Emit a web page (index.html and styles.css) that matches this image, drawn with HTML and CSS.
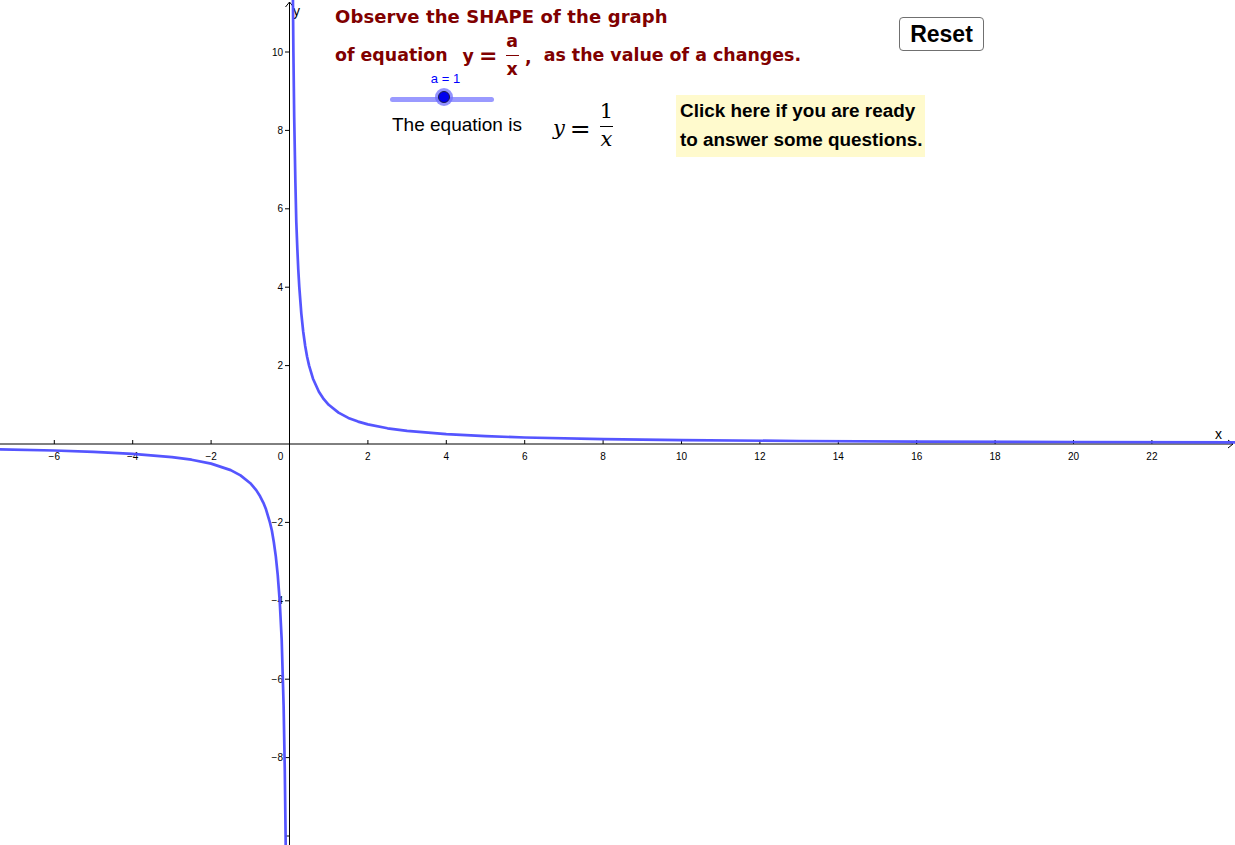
FILE: index.html
```html
<!DOCTYPE html>
<html>
<head>
<meta charset="utf-8">
<link rel="stylesheet" href="styles.css">
</head>
<body>
<div class="stage">
  <svg class="graph" width="1235" height="845" viewBox="0 0 1235 845">
    <g class="axes">
      <line x1="0" y1="444" x2="1233" y2="444"/>
      <polyline class="arrow" points="1228,440 1233,444 1228,448"/>
      <line x1="289.5" y1="2" x2="289.5" y2="845"/>
      <polyline class="arrow" points="285.5,7 289.5,2 293.5,7"/>
      <!-- x ticks -->
      <line x1="54.3" y1="440" x2="54.3" y2="444"/>
      <line x1="132.7" y1="440" x2="132.7" y2="444"/>
      <line x1="211.1" y1="440" x2="211.1" y2="444"/>
      <line x1="367.9" y1="440" x2="367.9" y2="444"/>
      <line x1="446.3" y1="440" x2="446.3" y2="444"/>
      <line x1="524.7" y1="440" x2="524.7" y2="444"/>
      <line x1="603.1" y1="440" x2="603.1" y2="444"/>
      <line x1="681.5" y1="440" x2="681.5" y2="444"/>
      <line x1="759.9" y1="440" x2="759.9" y2="444"/>
      <line x1="838.3" y1="440" x2="838.3" y2="444"/>
      <line x1="916.7" y1="440" x2="916.7" y2="444"/>
      <line x1="995.1" y1="440" x2="995.1" y2="444"/>
      <line x1="1073.5" y1="440" x2="1073.5" y2="444"/>
      <line x1="1151.9" y1="440" x2="1151.9" y2="444"/>
      <!-- y ticks -->
      <line x1="285" y1="52" x2="289.5" y2="52"/>
      <line x1="285" y1="130.4" x2="289.5" y2="130.4"/>
      <line x1="285" y1="208.8" x2="289.5" y2="208.8"/>
      <line x1="285" y1="287.2" x2="289.5" y2="287.2"/>
      <line x1="285" y1="365.6" x2="289.5" y2="365.6"/>
      <line x1="285" y1="522.4" x2="289.5" y2="522.4"/>
      <line x1="285" y1="600.8" x2="289.5" y2="600.8"/>
      <line x1="285" y1="679.2" x2="289.5" y2="679.2"/>
      <line x1="285" y1="757.6" x2="289.5" y2="757.6"/>
      <line x1="285" y1="836" x2="289.5" y2="836"/>
    </g>
    <g class="xlabels">
      <text x="54.3" y="460">−6</text>
      <text x="132.7" y="460">−4</text>
      <text x="211.1" y="460">−2</text>
      <text x="280.5" y="460">0</text>
      <text x="367.9" y="460">2</text>
      <text x="446.3" y="460">4</text>
      <text x="524.7" y="460">6</text>
      <text x="603.1" y="460">8</text>
      <text x="681.5" y="460">10</text>
      <text x="759.9" y="460">12</text>
      <text x="838.3" y="460">14</text>
      <text x="916.7" y="460">16</text>
      <text x="995.1" y="460">18</text>
      <text x="1073.5" y="460">20</text>
      <text x="1151.9" y="460">22</text>
    </g>
    <g class="ylabels">
      <text x="283" y="55.5">10</text>
      <text x="283" y="133.9">8</text>
      <text x="283" y="212.3">6</text>
      <text x="283" y="290.7">4</text>
      <text x="283" y="369.1">2</text>
      <text x="283" y="525.9">−2</text>
      <text x="283" y="604.3">−4</text>
      <text x="283" y="682.7">−6</text>
      <text x="283" y="761.1">−8</text>
    </g>
    <text class="axis-name" x="293" y="16">y</text>
    <text class="axis-name" x="1215" y="439">x</text>
    <polyline class="curve" points="292.9,-4 293.4,52 294.2,117.3 295.4,182.7 296.3,222 297.3,248 298.3,270 299.3,287.2 301.3,313.3 303.2,331.5 305.2,346 307.1,356.8 309.1,365.6 313.0,378.7 318.9,391.7 323.8,399.2 328.7,404.8 338.5,412.6 348.3,417.9 358.1,421.6 367.9,424.4 387.5,428.3 407.1,430.9 446.3,434.2 485.5,436.2 524.7,437.5 603.1,439.1 681.5,440.1 799.1,441.0 916.7,441.6 1073.5,442.0 1238.1,442.4"/>
    <polyline class="curve" points="-0.6,449.3 54.3,450.5 93.5,451.8 132.7,453.8 171.9,457.1 191.5,459.7 211.1,463.6 230.7,470.1 240.5,475.4 250.3,483.2 256.2,490.1 260.1,496.3 263.4,502.8 266.0,509.3 269.9,522.4 271.9,530.7 273.8,542 275.8,556.4 277.7,574.7 279.7,600.8 281.7,640 283.6,705.3 284.8,770.7 285.6,836 285.8,856.6"/>
  </svg>

  <div class="title">
    <div class="t1">Observe the SHAPE of the graph</div>
    <div class="t2">
      <span class="t2-text">of equation</span>
      <span class="t2-math">y<span class="t2-eq">=</span></span>
      <span class="frac frac-title"><span class="num">a</span><span class="den">x</span></span>
      <span class="comma">,</span>
      <span class="t2-text">as the value of a changes.</span>
    </div>
  </div>

  <div class="slider">
    <div class="slider-label">a = 1</div>
    <div class="slider-track"><span class="slider-knob"></span></div>
  </div>

  <div class="equation">
    <span class="eq-text">The equation is</span>
    <span class="eq-math"><span class="eq-lhs"><i>y</i><span class="eq-sign">=</span></span><span class="frac frac-eq"><span class="num">1</span><span class="den"><i>x</i></span></span></span>
  </div>

  <div class="ready">Click here if you are ready<br>to answer some questions.</div>

  <button class="reset">Reset</button>
</div>
</body>
</html>
```

FILE: styles.css
```css
html, body {
  margin: 0;
  padding: 0;
  background: #ffffff;
  overflow: hidden;
}

.stage {
  position: relative;
  width: 1235px;
  height: 845px;
  font-family: "Liberation Sans", Arial, sans-serif;
}

.graph {
  position: absolute;
  left: 0;
  top: 0;
}

.axes line,
.axes polyline {
  stroke: #000;
  stroke-width: 1;
  fill: none;
}

.xlabels text {
  font-family: "Liberation Sans", Arial, sans-serif;
  font-size: 10px;
  text-anchor: middle;
  fill: #000;
}

.ylabels text {
  font-family: "Liberation Sans", Arial, sans-serif;
  font-size: 10px;
  text-anchor: end;
  fill: #000;
}

.axis-name {
  font-family: "Liberation Sans", Arial, sans-serif;
  font-size: 14px;
  fill: #000;
}

.curve {
  fill: none;
  stroke: #4c4cff;
  stroke-width: 2.7;
  stroke-linejoin: round;
  stroke-linecap: round;
  opacity: 0.95;
}

/* title */
.title {
  position: absolute;
  left: 335px;
  top: 5px;
  color: #800000;
  font-family: "DejaVu Sans", sans-serif;
  font-weight: bold;
  font-size: 18px;
}

.t1 {
  line-height: 24px;
  white-space: nowrap;
  letter-spacing: 0.1px;
}

.t2 {
  display: flex;
  align-items: center;
  margin-top: 2px;
  white-space: nowrap;
  font-size: 17.4px;
}

.t2-math {
  margin-left: 15px;
  margin-right: 8px;
  display: inline-flex;
  align-items: center;
  padding-top: 2px;
}

.t2-eq {
  font-size: 22px;
  margin-left: 5px;
  line-height: 20px;
}

.frac {
  display: inline-flex;
  flex-direction: column;
  align-items: center;
}

.frac .den {
  border-top: 1.5px solid currentColor;
}

.frac-title .num,
.frac-title .den {
  line-height: 20px;
  padding: 0 1px;
}

.frac-title .num {
  padding-bottom: 4px;
}

.frac-title .den {
  padding-top: 2.5px;
}

.comma {
  margin-left: 6px;
  margin-right: 12px;
  padding-top: 4px;
}

/* slider */
.slider {
  position: absolute;
  left: 389px;
  top: 71px;
  width: 105px;
  display: flex;
  flex-direction: column;
  align-items: center;
}

.slider-label {
  color: #0000ff;
  font-size: 13px;
  line-height: 16px;
  margin-left: 8px;
}

.slider-track {
  position: relative;
  width: 104px;
  height: 5px;
  border-radius: 3px;
  background: #9a9aff;
  margin-top: 10px;
}

.slider-knob {
  position: absolute;
  left: 48px;
  top: -6px;
  width: 10px;
  height: 10px;
  border-radius: 50%;
  background: #0000ee;
  border: 1px solid #1a1a4a;
  box-shadow: 0 0 0 3px rgba(110, 110, 255, 0.75);
}

/* equation */
.equation {
  position: absolute;
  left: 392px;
  top: 100px;
  display: flex;
  align-items: center;
}

.eq-text {
  font-size: 19px;
  line-height: 24px;
  color: #000;
}

.eq-math {
  display: inline-flex;
  align-items: center;
  margin-left: 31px;
  font-family: "DejaVu Serif", "Liberation Serif", serif;
  font-size: 21px;
  color: #000;
}

.eq-lhs {
  display: inline-flex;
  align-items: center;
  padding-top: 6px;
}

.eq-sign {
  font-size: 25px;
  margin: 0 8px 0 5px;
  font-style: normal;
}

.frac-eq .num,
.frac-eq .den {
  line-height: 22px;
  padding: 0 1px;
}

.frac-eq .num {
  padding-bottom: 4px;
}

.frac-eq .den {
  padding-top: 1px;
  border-top-width: 1px;
}

/* yellow box */
.ready {
  position: absolute;
  left: 676px;
  top: 95px;
  width: 249px;
  height: 62px;
  box-sizing: border-box;
  padding: 1px 0 0 4px;
  background: #fffacd;
  color: #000;
  font-weight: bold;
  font-size: 18.9px;
  line-height: 29px;
  white-space: nowrap;
}

/* reset */
.reset {
  position: absolute;
  left: 899px;
  top: 17px;
  width: 85px;
  height: 34px;
  box-sizing: border-box;
  background: #fff;
  border: 1px solid #707070;
  border-radius: 4px;
  font-family: "Liberation Sans", Arial, sans-serif;
  font-weight: bold;
  font-size: 23px;
  color: #000;
  padding: 0;
}
```
